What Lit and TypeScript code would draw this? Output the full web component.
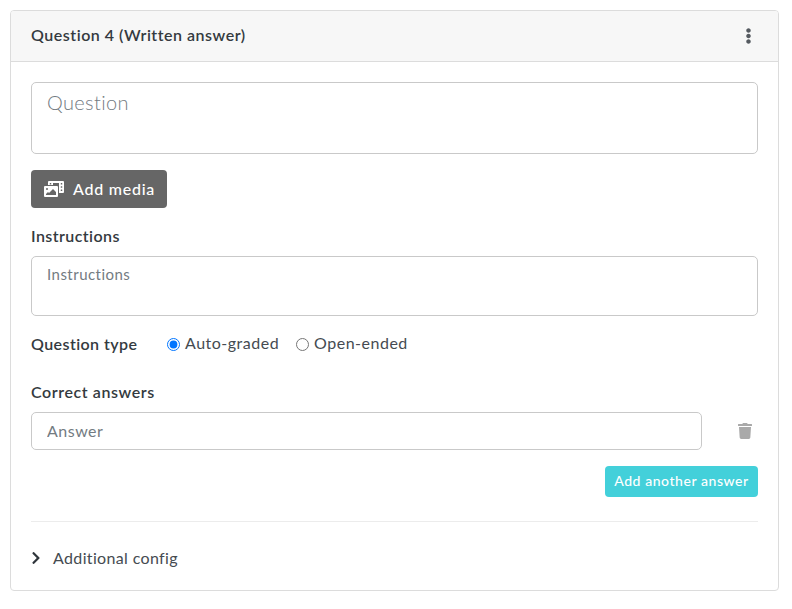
import { LitElement, html, css } from "lit";
import { customElement } from "lit/decorators.js";

@customElement("app-root")
export class AppRoot extends LitElement {
  static styles = css`
    :host { display: block; box-sizing: border-box; padding: 10px 13px 0 10px; font-family: "Lato", "Noto Sans", sans-serif; color: #343a40; font-size: 16px; background: #fff; }
    * { box-sizing: border-box; }
    .card { border: 1px solid #dcdcdc; border-radius: 4px; height: 581px; display: flex; flex-direction: column; }
    .head { height: 51px; flex: none; background: #f7f7f7; border-bottom: 1px solid #dcdcdc; border-radius: 3px 3px 0 0; display: flex; align-items: center; justify-content: space-between; padding: 0 26px 0 20px; font-weight: 600; letter-spacing: 0.52px; line-height: 48px; }
    .head span { padding-bottom: 2px; }
    .head svg { width: 7px; height: 16px; fill: #555a60; display: block; }
    .body { padding: 20px 20px 0; display: flex; flex-direction: column; flex: 1; }
    textarea, input[type="text"] { display: block; width: 100%; border: 1px solid #c9c9c9; border-radius: 5px; background: #fff; font-family: inherit; color: #343a40; outline: none; resize: none; margin: 0; }
    textarea::placeholder, input::placeholder { color: #737b82; opacity: 1; }
    .q { height: 72px; font-size: 20px; padding: 5px 15px; line-height: 28px; letter-spacing: 0.35px; font-weight: 300; }
    .media { margin-top: 16px; width: 136px; height: 38px; border: 0; border-radius: 4px; background: #666; color: #fff; font: inherit; font-weight: 500; letter-spacing: 0.75px; white-space: nowrap; display: flex; align-items: center; gap: 9px; padding: 0 0 0 13px; }
    .media span { padding-bottom: 2px; }
    .media svg { width: 20px; height: 16px; fill: #fff; flex: none; }
    label.t { display: block; font-weight: 600; letter-spacing: 0.42px; line-height: 24px; }
    .ins-l { margin-top: 16px; }
    .ins { margin-top: 8px; height: 60px; font-size: 15px; padding: 7px 15px; line-height: 20px; letter-spacing: 0.47px; }
    .type { margin-top: 16px; height: 24px; display: flex; align-items: center; }
    .type .t { width: 136px; flex: none; }
    .opt { display: flex; align-items: center; margin-right: 17px; letter-spacing: 0.5px; color: #454b51; line-height: 22px; padding-bottom: 2px; }
    .opt input { width: 13px; height: 13px; margin: 2px 5px 0 0; accent-color: #0075ff; }
    label.ca { margin-top: 24px; letter-spacing: 0.58px; }
    .row { margin-top: 8px; display: flex; align-items: center; gap: 36px; }
    .row input { flex: 1; height: 38px; font-size: 16px; padding: 0 15px 2px; letter-spacing: 0.5px; }
    .row svg { width: 14px; height: 16px; fill: #a9a9a9; margin-right: 6px; flex: none; }
    .add-wrap { margin-top: 16px; display: flex; justify-content: flex-end; }
    .add { width: 153px; height: 31px; padding: 0 0 2px; border: 0; border-radius: 4px; background: #43d0da; color: #fff; font: inherit; font-size: 14px; font-weight: 500; letter-spacing: 0.56px; }
    hr { width: 100%; margin: 24px 0 0; border: 0; border-top: 1px solid #ececec; }
    .cfg { margin-top: 24px; display: flex; align-items: center; gap: 12px; line-height: 24px; letter-spacing: 0.35px; color: #454b51; }
    .cfg svg { width: 10px; height: 14px; fill: #2f353b; flex: none; }
  `;

  render() {
    return html`
      <div class="card">
        <div class="head">
          <span>Question 4 (Written answer)</span>
          <svg viewBox="0 0 192 512"><path d="M96 184c39.8 0 72 32.2 72 72s-32.2 72-72 72-72-32.2-72-72 32.2-72 72-72zM24 80c0 39.8 32.2 72 72 72s72-32.2 72-72S135.8 8 96 8 24 40.2 24 80zm0 352c0 39.8 32.2 72 72 72s72-32.2 72-72-32.2-72-72-72-72 32.2-72 72z"/></svg>
        </div>
        <div class="body">
          <textarea class="q" placeholder="Question"></textarea>
          <button class="media">
            <svg viewBox="0 0 640 512"><path d="M608 0H160a32 32 0 0 0-32 32v96h160V64h192v320h128a32 32 0 0 0 32-32V32a32 32 0 0 0-32-32zM232 103a9 9 0 0 1-9 9h-30a9 9 0 0 1-9-9V73a9 9 0 0 1 9-9h30a9 9 0 0 1 9 9zm352 208a9 9 0 0 1-9 9h-30a9 9 0 0 1-9-9v-30a9 9 0 0 1 9-9h30a9 9 0 0 1 9 9zm0-104a9 9 0 0 1-9 9h-30a9 9 0 0 1-9-9v-30a9 9 0 0 1 9-9h30a9 9 0 0 1 9 9zm0-104a9 9 0 0 1-9 9h-30a9 9 0 0 1-9-9V73a9 9 0 0 1 9-9h30a9 9 0 0 1 9 9zm-168 57H32a32 32 0 0 0-32 32v288a32 32 0 0 0 32 32h384a32 32 0 0 0 32-32V192a32 32 0 0 0-32-32zM96 224a32 32 0 1 1-32 32 32 32 0 0 1 32-32zm288 224H64v-32l64-64 32 32 128-128 96 96z"/></svg>
            <span>Add media</span>
          </button>
          <label class="t ins-l">Instructions</label>
          <textarea class="ins" placeholder="Instructions"></textarea>
          <div class="type">
            <label class="t">Question type</label>
            <label class="opt"><input type="radio" name="qt" checked />Auto-graded</label>
            <label class="opt"><input type="radio" name="qt" />Open-ended</label>
          </div>
          <label class="t ca">Correct answers</label>
          <div class="row">
            <input type="text" placeholder="Answer" />
            <svg viewBox="0 0 448 512"><path d="M432 32H312l-9.4-18.7A24 24 0 0 0 281.1 0H166.8a23.72 23.72 0 0 0-21.4 13.3L136 32H16A16 16 0 0 0 0 48v32a16 16 0 0 0 16 16h416a16 16 0 0 0 16-16V48a16 16 0 0 0-16-16zM53.2 467a48 48 0 0 0 47.9 45h245.8a48 48 0 0 0 47.9-45L416 128H32z"/></svg>
          </div>
          <div class="add-wrap"><button class="add">Add another answer</button></div>
          <hr />
          <div class="cfg">
            <svg viewBox="0 0 320 512"><path d="M285.476 272.971L91.132 467.314c-9.373 9.373-24.569 9.373-33.941 0l-22.667-22.667c-9.357-9.357-9.375-24.522-.04-33.901L188.505 256 34.484 101.255c-9.335-9.379-9.317-24.544.04-33.901l22.667-22.667c9.373-9.373 24.569-9.373 33.941 0L285.475 239.03c9.373 9.372 9.373 24.568.001 33.941z"/></svg>
            <span>Additional config</span>
          </div>
        </div>
      </div>
    `;
  }
}
